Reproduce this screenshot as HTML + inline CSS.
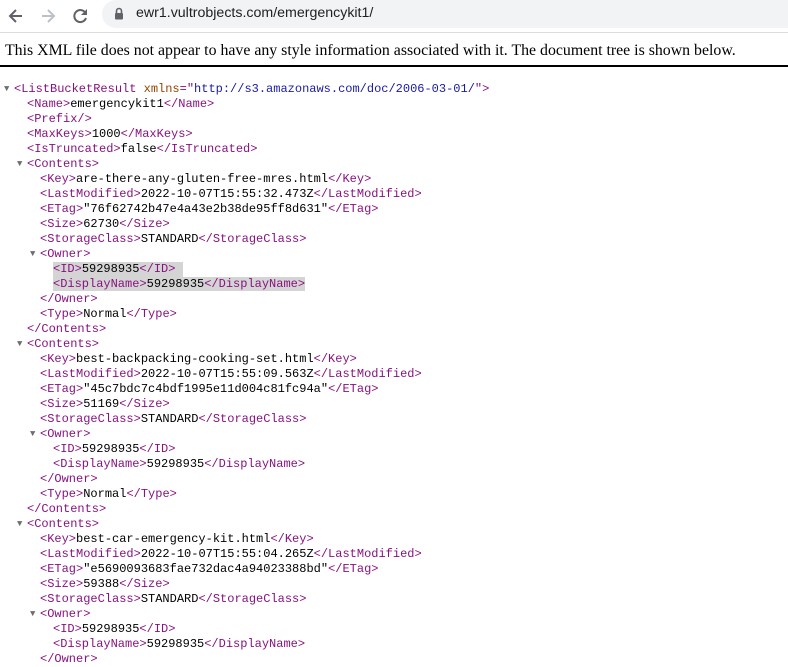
<!DOCTYPE html>
<html><head><meta charset="utf-8"><style>
html,body{margin:0;padding:0;width:788px;height:656px;overflow:hidden;background:#fff}
.bar{position:absolute;left:0;top:0;width:788px;height:32px;background:#fff;border-bottom:1px solid #dadce0}
.url{position:absolute;left:102px;top:0;width:700px;height:28px;background:#f1f3f4;border-radius:0 0 0 14px;border-top-left-radius:14px}
.urltxt{position:absolute;left:136px;top:5px;font:14.2px "Liberation Sans",sans-serif;color:#202124}
.hdr{position:absolute;left:5px;top:42px;font:15.85px "Liberation Serif",serif;color:#000;white-space:nowrap}
.rule{position:absolute;left:0;top:65px;width:788px;height:2px;background:#000}
.tree{position:absolute;left:0;top:82px;font:12px "Liberation Mono",monospace;color:#000}
.l{height:15px;line-height:15px;position:relative;white-space:pre}
.t{color:#881280}.an{color:#994500}.av{color:#1a1aa6}
.tri{position:absolute;font-size:9px;color:#6e6e6e}
.hl{background:#d4d4d4}
</style></head><body>
<div class="bar"></div>
<div class="url"></div>
<svg style="position:absolute;left:6px;top:6px" width="20" height="20" viewBox="0 0 20 20"><path d="M16 10H5M10 4L4 10l6 6" stroke="#5f6368" stroke-width="2" fill="none"/></svg>
<svg style="position:absolute;left:38px;top:6px" width="20" height="20" viewBox="0 0 20 20"><path d="M4 10h11M10 4l6 6-6 6" stroke="#bdc1c6" stroke-width="2" fill="none"/></svg>
<svg style="position:absolute;left:70px;top:6px" width="20" height="20" viewBox="0 0 20 20"><path d="M15.5 7A6 6 0 1 0 16 12" stroke="#5f6368" stroke-width="2" fill="none"/><path d="M17 3v6h-6z" fill="#5f6368"/></svg>
<svg style="position:absolute;left:114px;top:7px" width="10" height="13" viewBox="0 0 10 13"><path d="M2.5 6V4a2.5 2.5 0 0 1 5 0v2" stroke="#5f6368" stroke-width="1.6" fill="none"/><rect x="1" y="6" width="8" height="6.5" rx="1" fill="#5f6368"/></svg>
<div class="urltxt">ewr1.vultrobjects.com/emergencykit1/</div>
<div class="hdr">This XML file does not appear to have any style information associated with it. The document tree is shown below.</div>
<div class="rule"></div>
<div class="tree"><div class="l" style="padding-left:14px"><span class="tri" style="left:4px">▼</span><span class="t">&lt;ListBucketResult</span> <span class="an">xmlns</span><span class="t">="</span><span class="av">http://s3.amazonaws.com/doc/2006-03-01/</span><span class="t">"&gt;</span></div><div class="l" style="padding-left:27px"><span class="t">&lt;Name&gt;</span>emergencykit1<span class="t">&lt;/Name&gt;</span></div><div class="l" style="padding-left:27px"><span class="t">&lt;Prefix/&gt;</span></div><div class="l" style="padding-left:27px"><span class="t">&lt;MaxKeys&gt;</span>1000<span class="t">&lt;/MaxKeys&gt;</span></div><div class="l" style="padding-left:27px"><span class="t">&lt;IsTruncated&gt;</span>false<span class="t">&lt;/IsTruncated&gt;</span></div><div class="l" style="padding-left:27px"><span class="tri" style="left:17px">▼</span><span class="t">&lt;Contents&gt;</span></div><div class="l" style="padding-left:40px"><span class="t">&lt;Key&gt;</span>are-there-any-gluten-free-mres.html<span class="t">&lt;/Key&gt;</span></div><div class="l" style="padding-left:40px"><span class="t">&lt;LastModified&gt;</span>2022-10-07T15:55:32.473Z<span class="t">&lt;/LastModified&gt;</span></div><div class="l" style="padding-left:40px"><span class="t">&lt;ETag&gt;</span>"76f62742b47e4a43e2b38de95ff8d631"<span class="t">&lt;/ETag&gt;</span></div><div class="l" style="padding-left:40px"><span class="t">&lt;Size&gt;</span>62730<span class="t">&lt;/Size&gt;</span></div><div class="l" style="padding-left:40px"><span class="t">&lt;StorageClass&gt;</span>STANDARD<span class="t">&lt;/StorageClass&gt;</span></div><div class="l" style="padding-left:40px"><span class="tri" style="left:30px">▼</span><span class="t">&lt;Owner&gt;</span></div><div class="l" style="padding-left:53px"><span class="hl" style="display:inline-block;width:130px"><span class="t">&lt;ID&gt;</span>59298935<span class="t">&lt;/ID&gt;</span></span></div><div class="l" style="padding-left:53px"><span class="hl"><span class="t">&lt;DisplayName&gt;</span>59298935<span class="t">&lt;/DisplayName&gt;</span></span></div><div class="l" style="padding-left:40px"><span class="t">&lt;/Owner&gt;</span></div><div class="l" style="padding-left:40px"><span class="t">&lt;Type&gt;</span>Normal<span class="t">&lt;/Type&gt;</span></div><div class="l" style="padding-left:27px"><span class="t">&lt;/Contents&gt;</span></div><div class="l" style="padding-left:27px"><span class="tri" style="left:17px">▼</span><span class="t">&lt;Contents&gt;</span></div><div class="l" style="padding-left:40px"><span class="t">&lt;Key&gt;</span>best-backpacking-cooking-set.html<span class="t">&lt;/Key&gt;</span></div><div class="l" style="padding-left:40px"><span class="t">&lt;LastModified&gt;</span>2022-10-07T15:55:09.563Z<span class="t">&lt;/LastModified&gt;</span></div><div class="l" style="padding-left:40px"><span class="t">&lt;ETag&gt;</span>"45c7bdc7c4bdf1995e11d004c81fc94a"<span class="t">&lt;/ETag&gt;</span></div><div class="l" style="padding-left:40px"><span class="t">&lt;Size&gt;</span>51169<span class="t">&lt;/Size&gt;</span></div><div class="l" style="padding-left:40px"><span class="t">&lt;StorageClass&gt;</span>STANDARD<span class="t">&lt;/StorageClass&gt;</span></div><div class="l" style="padding-left:40px"><span class="tri" style="left:30px">▼</span><span class="t">&lt;Owner&gt;</span></div><div class="l" style="padding-left:53px"><span class="t">&lt;ID&gt;</span>59298935<span class="t">&lt;/ID&gt;</span></div><div class="l" style="padding-left:53px"><span class="t">&lt;DisplayName&gt;</span>59298935<span class="t">&lt;/DisplayName&gt;</span></div><div class="l" style="padding-left:40px"><span class="t">&lt;/Owner&gt;</span></div><div class="l" style="padding-left:40px"><span class="t">&lt;Type&gt;</span>Normal<span class="t">&lt;/Type&gt;</span></div><div class="l" style="padding-left:27px"><span class="t">&lt;/Contents&gt;</span></div><div class="l" style="padding-left:27px"><span class="tri" style="left:17px">▼</span><span class="t">&lt;Contents&gt;</span></div><div class="l" style="padding-left:40px"><span class="t">&lt;Key&gt;</span>best-car-emergency-kit.html<span class="t">&lt;/Key&gt;</span></div><div class="l" style="padding-left:40px"><span class="t">&lt;LastModified&gt;</span>2022-10-07T15:55:04.265Z<span class="t">&lt;/LastModified&gt;</span></div><div class="l" style="padding-left:40px"><span class="t">&lt;ETag&gt;</span>"e5690093683fae732dac4a94023388bd"<span class="t">&lt;/ETag&gt;</span></div><div class="l" style="padding-left:40px"><span class="t">&lt;Size&gt;</span>59388<span class="t">&lt;/Size&gt;</span></div><div class="l" style="padding-left:40px"><span class="t">&lt;StorageClass&gt;</span>STANDARD<span class="t">&lt;/StorageClass&gt;</span></div><div class="l" style="padding-left:40px"><span class="tri" style="left:30px">▼</span><span class="t">&lt;Owner&gt;</span></div><div class="l" style="padding-left:53px"><span class="t">&lt;ID&gt;</span>59298935<span class="t">&lt;/ID&gt;</span></div><div class="l" style="padding-left:53px"><span class="t">&lt;DisplayName&gt;</span>59298935<span class="t">&lt;/DisplayName&gt;</span></div><div class="l" style="padding-left:40px"><span class="t">&lt;/Owner&gt;</span></div></div>
</body></html>
